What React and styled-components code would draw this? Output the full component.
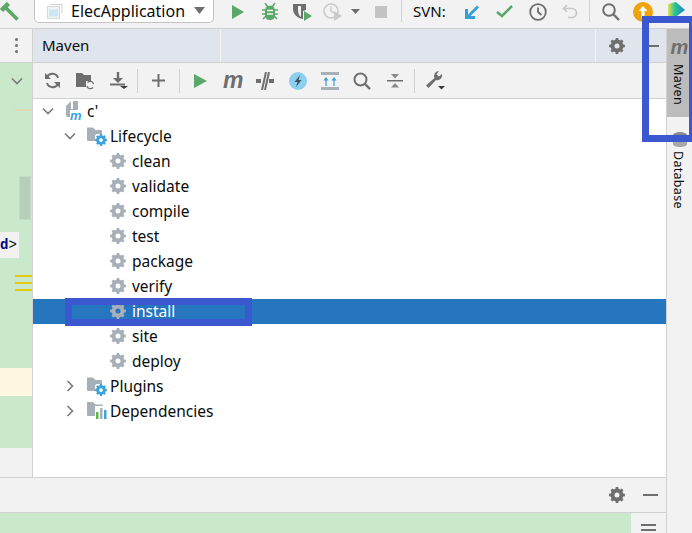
import React from 'react';
import styled, { createGlobalStyle } from 'styled-components';

const GlobalStyle = createGlobalStyle`
  html, body {
    margin: 0;
    padding: 0;
    overflow: hidden;
    background: #f2f2f2;
  }
  * { box-sizing: border-box; }
`;

const gearPoints = (teeth = 8) => {
  const pts = [];
  const step = (Math.PI * 2) / teeth;
  for (let i = 0; i < teeth; i++) {
    const a = i * step - Math.PI / 2;
    const w = step * 0.2;
    const v = step * 0.31;
    [[6.4, a - v], [8, a - w], [8, a + w], [6.4, a + v]].forEach(([r, t]) => {
      pts.push(`${(8 + r * Math.cos(t)).toFixed(2)} ${(8 + r * Math.sin(t)).toFixed(2)}`);
    });
  }
  return `M${pts.join('L')}Z M8 5.5a2.5 2.5 0 1 0 0 5a2.5 2.5 0 1 0 0 -5Z`;
};
const GEAR = gearPoints();

const Gear = ({ color = '#a7b0b8', size = 16 }) => (
  <svg width={size} height={size} viewBox="0 0 16 16">
    <path d={GEAR} fill={color} fillRule="evenodd" />
  </svg>
);

const Chevron = ({ open }) => (
  <svg width="16" height="16" viewBox="0 0 16 16">
    <path
      d={open ? 'M3 5.5l5 5 5-5' : 'M5.5 3l5 5-5 5'}
      fill="none"
      stroke="#7a7a7a"
      strokeWidth="1.6"
    />
  </svg>
);

const Folder = ({ children }) => (
  <svg width="20" height="20" viewBox="0 0 20 20">
    <path d="M0 1.5h6l2.5 2.5H14a1 1 0 0 1 1 1v10H1a1 1 0 0 1-1-1z" fill="#a7b0b8" />
    {children}
  </svg>
);

const GearBadge = () => (
  <svg x="8" y="8" width="12" height="12" viewBox="0 0 16 16">
    <circle cx="8" cy="8" r="10" fill="#fff" />
    <path d={GEAR} fill="#3ba4dc" fillRule="evenodd" />
  </svg>
);

const RootIcon = () => (
  <svg width="19" height="20" viewBox="0 0 19 20">
    <path d="M8 0h5v14H8z" fill="#a7b0b8" />
    <path d="M1 5l5-5v8h3v8H3a2 2 0 0 1-2-2z" fill="#a7b0b8" />
    <rect x="5" y="9" width="14" height="11" fill="#fff" />
    <text x="5" y="18.500" fontFamily="Liberation Sans, sans-serif" fontWeight="700" fontStyle="italic" fontSize="13" fill="#3ba4dc">m</text>
  </svg>
);

const DepsIcon = () => (
  <svg width="20" height="20" viewBox="0 0 20 20">
    <path d="M0 1h6l2.5 2.5H15a1 1 0 0 1 1 1V15H1a1 1 0 0 1-1-1z" fill="#a7b0b8" />
    <rect x="8" y="5" width="12" height="13" fill="#fff" />
    <rect x="9" y="11" width="2.5" height="7" fill="#62b543" />
    <rect x="13" y="7" width="2.5" height="11" fill="#a7b0b8" />
    <rect x="17" y="9" width="2.5" height="9" fill="#3ba4dc" />
  </svg>
);

const Page = styled.div`
  width: 692px;
  height: 533px;
  display: flex;
  flex-direction: column;
  overflow: hidden;
  position: relative;
  background: #f2f2f2;
  color: #0b0b0b;
  font-family: 'Noto Sans', 'Open Sans', sans-serif;
  font-size: 15px;
`;

const TopBar = styled.header`
  height: 29px;
  flex: none;
  display: flex;
  align-items: flex-start;
  border-bottom: 1px solid #d1d1d1;
`;

const TopIcon = styled.div`
  flex: none;
  width: ${p => p.$w}px;
  margin-left: ${p => p.$ml || 0}px;
  height: 23px;
  display: flex;
  align-items: center;
  justify-content: center;
`;

const ComboBox = styled.div`
  flex: none;
  width: 180px;
  height: 24px;
  margin-top: -1px;
  margin-left: 15px;
  background: #fff;
  border: 1px solid #c4c4c4;
  border-top: 0;
  border-radius: 0 0 5px 5px;
  display: flex;
  align-items: center;
  padding-left: 11px;
`;

const ComboLabel = styled.span`
  margin-left: 7px;
  width: 123px;
  font-size: 16px;
  line-height: 22px;
  white-space: nowrap;
`;

const TopSep = styled.div`
  flex: none;
  width: 1px;
  height: 22px;
  background: #d1d1d1;
  margin-left: ${p => p.$ml}px;
`;

const SvnLabel = styled.span`
  flex: none;
  margin-left: 11px;
  line-height: 22px;
`;

const Middle = styled.div`
  flex: 1;
  min-height: 0;
  display: flex;
`;

const Workspace = styled.div`
  flex: 1;
  min-width: 0;
  display: flex;
  flex-direction: column;
`;

const Columns = styled.div`
  flex: 1;
  min-height: 0;
  display: flex;
`;

const Gutter = styled.aside`
  width: 33px;
  flex: none;
  display: flex;
  flex-direction: column;
  border-right: 1px solid #d1d1d1;
`;

const GutterHead = styled.div`
  height: 34px;
  flex: none;
  display: flex;
  align-items: center;
  justify-content: center;
  padding-left: 1px;
  border-bottom: 1px solid #d1d1d1;
`;

const Dots = styled.div`
  display: flex;
  flex-direction: column;
  gap: 3px;
  & > i {
    display: block;
    width: 3px;
    height: 3px;
    border-radius: 50%;
    background: #6e6e6e;
  }
`;

const GreenArea = styled.div`
  height: 385px;
  flex: none;
  background: #c9e8cc;
  display: flex;
  flex-direction: column;
`;

const GutterFold = styled.div`
  height: 36px;
  padding-left: 9px;
  display: flex;
  align-items: center;
`;

const TanLine = styled.div`
  height: 2px;
  margin: 10px 0 0 15px;
  background: #e3d6b5;
`;

const ScrollThumb = styled.div`
  width: 12px;
  height: 44px;
  margin: 65px 0 0 19px;
  background: #b5cfb9;
  border: 1px solid #c2dbc6;
`;

const CodeChip = styled.div`
  width: 19px;
  height: 26px;
  margin-top: 12px;
  background: #f2f2f2;
  font-family: 'Liberation Mono', monospace;
  font-size: 14px;
  line-height: 26px;
  white-space: nowrap;
  overflow: hidden;
  & > b { color: #000080; }
`;

const YellowMarks = styled.div`
  margin: 17px 0 0 15px;
  height: 16px;
  display: flex;
  flex-direction: column;
  justify-content: space-between;
  & > i {
    display: block;
    height: 2px;
    background: #e8c90c;
  }
`;

const CreamBand = styled.div`
  height: 28px;
  margin-top: 77px;
  background: #fff8e1;
`;

const Panel = styled.section`
  flex: 1;
  min-width: 0;
  display: flex;
  flex-direction: column;
`;

const PanelHead = styled.div`
  height: 34px;
  flex: none;
  background: #e0e4ec;
  border-bottom: 1px solid #d1d1d1;
  display: flex;
  align-items: center;
`;

const HeadTab = styled.div`
  width: 188px;
  height: 100%;
  flex: none;
  padding-left: 9px;
  line-height: 33px;
  border-right: 1px solid #f2f2f2;
`;

const HeadFill = styled.div`
  width: 375px;
  height: 100%;
  flex: none;
  border-right: 1px solid #f2f2f2;
`;

const HeadAction = styled.div`
  flex: none;
  width: ${p => p.$w}px;
  margin-left: ${p => p.$ml || 0}px;
  display: flex;
  justify-content: center;
`;

const Minus = styled.i`
  display: block;
  width: 15px;
  height: 2px;
  background: #6e6e6e;
`;

const ToolBar = styled.div`
  height: 36px;
  flex: none;
  border-bottom: 1px solid #d1d1d1;
  display: flex;
  align-items: center;
  padding-left: 3px;
`;

const Tool = styled.div`
  flex: none;
  width: ${p => p.$w || 33}px;
  display: flex;
  justify-content: center;
  align-items: center;
  height: 24px;
`;

const ToolSep = styled.div`
  flex: none;
  width: 1px;
  height: 24px;
  background: #d1d1d1;
  margin: 0 4px 0 ${p => p.$ml || 2}px;
`;

const MavenGlyph = styled.span`
  font-family: 'Liberation Sans', sans-serif;
  font-weight: 700;
  font-style: italic;
  font-size: ${p => p.$size || 23}px;
  line-height: 1;
  color: #6e6e6e;
`;

const Tree = styled.div`
  flex: 1;
  min-height: 0;
  background: #fff;
  font-size: 15.5px;
`;

const Row = styled.div`
  height: 25px;
  display: flex;
  align-items: center;
  padding-left: ${p => p.$pad}px;
  padding-bottom: 2px;
  background: ${p => (p.$selected ? '#2675bf' : 'transparent')};
  color: ${p => (p.$selected ? '#fff' : '#0b0b0b')};
  white-space: nowrap;
`;

const RowChevron = styled.span`
  flex: none;
  display: flex;
  width: 16px;
  margin-right: 9px;
`;

const RowIcon = styled.span`
  flex: none;
  display: flex;
  margin-right: ${p => p.$mr}px;
`;

const BottomBar = styled.div`
  height: 36px;
  flex: none;
  border-top: 1px solid #d1d1d1;
  border-bottom: 1px solid #d1d1d1;
  display: flex;
  align-items: center;
  justify-content: flex-end;
`;

const Footer = styled.div`
  height: 20px;
  flex: none;
  display: flex;
`;

const FooterGreen = styled.div`
  flex: 1;
  background: #c9e8cc;
`;

const FooterSide = styled.div`
  width: 35px;
  flex: none;
  display: flex;
  flex-direction: column;
  align-items: center;
  gap: 3px;
  padding-top: 11px;
  & > i {
    display: block;
    width: 15px;
    height: 2px;
    flex: none;
    background: #6e6e6e;
  }
`;

const RightStrip = styled.aside`
  width: 26px;
  flex: none;
  border-left: 1px solid #d1d1d1;
  display: flex;
  flex-direction: column;
`;

const StripTab = styled.div`
  height: 88px;
  flex: none;
  background: #bcbcbc;
  display: flex;
  flex-direction: column;
  align-items: center;
`;

const StripIcon = styled.div`
  height: 35px;
  flex: none;
  display: flex;
  align-items: center;
  justify-content: center;
`;

const VerticalLabel = styled.span`
  writing-mode: vertical-rl;
  font-size: 12.5px;
  line-height: 16px;
  letter-spacing: 0.3px;
  margin-right: 4px;
  color: #0b0b0b;
`;

const DbWrap = styled.div`
  margin-top: 15px;
  display: flex;
  flex-direction: column;
  align-items: center;
  gap: 4px;
`;

const AnnotationBox = styled.div`
  position: absolute;
  border: 7px solid #3b58d0;
  pointer-events: none;
`;

const MavenBox = styled(AnnotationBox)`
  left: 642px;
  top: 16px;
  width: 54px;
  height: 126px;
`;

const InstallBox = styled(AnnotationBox)`
  left: 65px;
  top: 298px;
  width: 187px;
  height: 28px;
`;

const goals = ['clean', 'validate', 'compile', 'test', 'package', 'verify', 'install', 'site', 'deploy'];

const TopToolbar = () => (
  <TopBar>
    <TopIcon $w={19}>
      <svg width="19" height="19" viewBox="0 0 19 19">
        <path d="M1.500 8.500L8.500 1.500" stroke="#59a869" strokeWidth="4.500" />
        <path d="M5 5l12.500 12.500" stroke="#59a869" strokeWidth="3.500" />
      </svg>
    </TopIcon>
    <ComboBox>
      <svg width="18" height="16" viewBox="0 0 18 16">
        <path d="M4 1.500h12v9" fill="none" stroke="#d3d3d3" />
        <rect x="1.500" y="3.500" width="12" height="12" fill="#eef3f6" stroke="#d8d8d8" />
        <rect x="3" y="6.500" width="9" height="7" fill="#cde6f3" />
      </svg>
      <ComboLabel>ElecApplication</ComboLabel>
      <svg width="11" height="7" viewBox="0 0 11 7"><path d="M0 0h11L5.500 7z" fill="#6e6e6e" /></svg>
    </ComboBox>
    <TopIcon $w={12} $ml={18}>
      <svg width="12" height="14" viewBox="0 0 12 14"><path d="M0 0l12 7L0 14z" fill="#59a869" /></svg>
    </TopIcon>
    <TopIcon $w={16} $ml={18}>
      <svg width="16" height="17" viewBox="0 0 16 17">
        <path d="M3 0l2.500 3.500h5L13 0M0 7h16M0 11h16M1 16l3-3M15 16l-3-3" fill="none" stroke="#59a869" strokeWidth="1.500" />
        <rect x="3" y="3" width="10" height="14" rx="4.500" fill="#59a869" />
        <path d="M5 7.500h6M5 11h6" stroke="#f2f2f2" strokeWidth="1.300" />
      </svg>
    </TopIcon>
    <TopIcon $w={19} $ml={15}>
      <svg width="19" height="18" viewBox="0 0 19 18">
        <path d="M0 1h13v6l-3 1v8c-6-1-10-5-10-10z" fill="#6e6e6e" />
        <path d="M5 3h3v11c-2-1-3-4-3-7z" fill="#f2f2f2" />
        <path d="M11 8l8 5-8 5z" fill="#59a869" />
      </svg>
    </TopIcon>
    <TopIcon $w={19} $ml={11}>
      <svg width="19" height="18" viewBox="0 0 19 18">
        <circle cx="8" cy="8" r="7" fill="none" stroke="#cacaca" strokeWidth="1.600" />
        <path d="M8 3.500V8l3 2" fill="none" stroke="#cacaca" strokeWidth="1.400" />
        <path d="M11 8l8 5-8 5z" fill="#cacaca" />
      </svg>
    </TopIcon>
    <TopIcon $w={9} $ml={9}>
      <svg width="9" height="5" viewBox="0 0 9 5"><path d="M0 0h9L4.500 5z" fill="#6e6e6e" /></svg>
    </TopIcon>
    <TopIcon $w={12} $ml={15}>
      <svg width="12" height="12"><rect width="12" height="12" fill="#c4c4c4" /></svg>
    </TopIcon>
    <TopSep $ml={14} />
    <SvnLabel>SVN:</SvnLabel>
    <TopIcon $w={14} $ml={19}>
      <svg width="14" height="14" viewBox="0 0 14 14">
        <path d="M13 1.500L3 11.500" stroke="#389fd6" strokeWidth="2.800" />
        <path d="M0 4h3v7h7v3H0z" fill="#389fd6" />
      </svg>
    </TopIcon>
    <TopIcon $w={17} $ml={17}>
      <svg width="17" height="13" viewBox="0 0 17 13"><path d="M1 7l5 4 10-10" fill="none" stroke="#59a869" strokeWidth="2.600" /></svg>
    </TopIcon>
    <TopIcon $w={18} $ml={16}>
      <svg width="18" height="18" viewBox="0 0 18 18">
        <circle cx="9" cy="9" r="7.800" fill="none" stroke="#6e6e6e" strokeWidth="1.800" />
        <path d="M9 4.500V9l3.500 3" fill="none" stroke="#6e6e6e" strokeWidth="1.800" />
      </svg>
    </TopIcon>
    <TopIcon $w={16} $ml={15}>
      <svg width="16" height="15" viewBox="0 0 16 15">
        <path d="M5 1L1.500 4.500 5 8" fill="none" stroke="#c8c8c8" strokeWidth="1.700" />
        <path d="M2 4.500h8a4.500 4.500 0 0 1 0 9H6" fill="none" stroke="#c8c8c8" strokeWidth="1.700" />
      </svg>
    </TopIcon>
    <TopSep $ml={11} />
    <TopIcon $w={18} $ml={12}>
      <svg width="18" height="18" viewBox="0 0 18 18">
        <circle cx="7" cy="7" r="5.800" fill="none" stroke="#6e6e6e" strokeWidth="2" />
        <path d="M11 11l6 6" stroke="#6e6e6e" strokeWidth="2.400" />
      </svg>
    </TopIcon>
    <TopIcon $w={20} $ml={13}>
      <svg width="20" height="20" viewBox="0 0 20 20">
        <circle cx="10" cy="10" r="10" fill="#f0a30a" />
        <path d="M10 4l4.500 5H11.500v7h-3V9H5.500z" fill="#fff" />
      </svg>
    </TopIcon>
    <TopIcon $w={18} $ml={14}>
      <svg width="18" height="19" viewBox="0 0 18 19">
        <defs>
          <linearGradient id="logoGrad" x1="0" y1="0" x2="1" y2="0">
            <stop offset="0" stopColor="#e8e05a" />
            <stop offset="0.4" stopColor="#2cc58f" />
            <stop offset="1" stopColor="#1c7fd6" />
          </linearGradient>
        </defs>
        <path d="M1 2l8-2 9 8-12 9-5-3z" fill="url(#logoGrad)" />
      </svg>
    </TopIcon>
  </TopBar>
);

const MavenToolbar = () => (
  <ToolBar>
    <Tool>
      <svg width="17" height="17" viewBox="0 0 17 17">
        <path d="M14 6A6 6 0 0 0 3 5M3 11a6 6 0 0 0 11 1" fill="none" stroke="#6e6e6e" strokeWidth="2" />
        <path d="M1 1v6h6zM16 16v-6h-6z" fill="#6e6e6e" />
      </svg>
    </Tool>
    <Tool>
      <svg width="19" height="18" viewBox="0 0 19 18">
        <path d="M0 1h6l2 2h7v6h-5v6H0z" fill="#6e6e6e" />
        <path d="M17.500 12a3.500 3.500 0 0 0-6-1.500M11 14a3.500 3.500 0 0 0 6 1.500" fill="none" stroke="#6e6e6e" strokeWidth="1.200" />
      </svg>
    </Tool>
    <Tool>
      <svg width="18" height="17" viewBox="0 0 18 17">
        <path d="M6.800 0h2.400v6H13l-5 5-5-5h3.800z" fill="#6e6e6e" />
        <rect x="0" y="11.500" width="15" height="2" fill="#6e6e6e" />
        <path d="M10 14h8l-4 3z" fill="#3c3c3c" />
      </svg>
    </Tool>
    <ToolSep />
    <Tool>
      <svg width="13" height="13" viewBox="0 0 13 13"><path d="M5.500 0h2v5.500H13v2H7.500V13h-2V7.500H0v-2h5.500z" fill="#6e6e6e" /></svg>
    </Tool>
    <ToolSep $ml={4} />
    <Tool>
      <svg width="13" height="14" viewBox="0 0 13 14"><path d="M0 0l13 7L0 14z" fill="#59a869" /></svg>
    </Tool>
    <Tool $w={32.3}><MavenGlyph>m</MavenGlyph></Tool>
    <Tool $w={32.3}>
      <svg width="18" height="18" viewBox="0 0 18 18">
        <path d="M0 7h5v4H0zM13 7h5v4h-5z" fill="#6e6e6e" />
        <path d="M10 0L6 18M13 0L9 18" stroke="#6e6e6e" strokeWidth="2" />
      </svg>
    </Tool>
    <Tool $w={32.3}>
      <svg width="18" height="18" viewBox="0 0 18 18">
        <circle cx="9" cy="9" r="9" fill="#8ccfee" />
        <path d="M11 3L5.500 10H8.500L7 15l5.500-7H9.500z" fill="#3f5666" />
      </svg>
    </Tool>
    <Tool $w={32.3}>
      <svg width="18" height="18" viewBox="0 0 18 18">
        <rect width="18" height="3" fill="#a7b0b8" />
        <rect y="15" width="18" height="3" fill="#a7b0b8" />
        <path d="M5 14V8M13 14V8" stroke="#389fd6" strokeWidth="1.200" />
        <path d="M5 5l2.500 3.500h-5zM13 5l2.500 3.500h-5z" fill="#389fd6" />
      </svg>
    </Tool>
    <Tool $w={32.3}>
      <svg width="18" height="18" viewBox="0 0 18 18">
        <circle cx="7.500" cy="7.500" r="6" fill="none" stroke="#6e6e6e" strokeWidth="2" />
        <path d="M12 12l5 5" stroke="#6e6e6e" strokeWidth="2.400" />
      </svg>
    </Tool>
    <Tool $w={32.3}>
      <svg width="16" height="16" viewBox="0 0 16 16">
        <path d="M0 7h16v1.500H0z" fill="#6e6e6e" />
        <path d="M4 1h8L8 5.500zM4 14.500h8L8 10z" fill="#8a8a8a" />
      </svg>
    </Tool>
    <ToolSep $ml={3} />
    <Tool>
      <svg width="20" height="19" viewBox="0 0 20 19">
        <path d="M14 0a5 5 0 0 0-4.500 7L1 14.500 3.500 17 11 9a5 5 0 0 0 6-6l-3 2.500-2.500-2L14 0z" fill="#6e6e6e" />
        <path d="M13 15h7l-3.500 3.500z" fill="#3c3c3c" />
      </svg>
    </Tool>
  </ToolBar>
);

export default function App() {
  return (
    <>
      <GlobalStyle />
      <Page>
        <TopToolbar />
        <Middle>
          <Workspace>
            <Columns>
              <Gutter>
                <GutterHead>
                  <Dots><i /><i /><i /></Dots>
                </GutterHead>
                <GreenArea>
                  <GutterFold><Chevron open /></GutterFold>
                  <TanLine />
                  <ScrollThumb />
                  <CodeChip><b>d</b>&gt;</CodeChip>
                  <YellowMarks><i /><i /><i /></YellowMarks>
                  <CreamBand />
                </GreenArea>
              </Gutter>
              <Panel>
                <PanelHead>
                  <HeadTab>Maven</HeadTab>
                  <HeadFill />
                  <HeadAction $w={16} $ml={13}><Gear color="#6e6e6e" /></HeadAction>
                  <HeadAction $w={16} $ml={18}><Minus /></HeadAction>
                </PanelHead>
                <MavenToolbar />
                <Tree>
                  <Row $pad={7}>
                    <RowChevron><Chevron open /></RowChevron>
                    <RowIcon $mr={3}><RootIcon /></RowIcon>
                    c'
                  </Row>
                  <Row $pad={29}>
                    <RowChevron><Chevron open /></RowChevron>
                    <RowIcon $mr={3}><Folder><GearBadge /></Folder></RowIcon>
                    Lifecycle
                  </Row>
                  {goals.map(goal => (
                    <Row key={goal} $pad={77} $selected={goal === 'install'}>
                      <RowIcon $mr={6}><Gear /></RowIcon>
                      {goal}
                    </Row>
                  ))}
                  <Row $pad={29}>
                    <RowChevron><Chevron /></RowChevron>
                    <RowIcon $mr={3}><Folder><GearBadge /></Folder></RowIcon>
                    Plugins
                  </Row>
                  <Row $pad={29}>
                    <RowChevron><Chevron /></RowChevron>
                    <RowIcon $mr={3}><DepsIcon /></RowIcon>
                    Dependencies
                  </Row>
                </Tree>
              </Panel>
            </Columns>
            <BottomBar>
              <HeadAction $w={16}><Gear color="#6e6e6e" /></HeadAction>
              <HeadAction $w={16} $ml={17}><Minus /></HeadAction>
              <HeadAction $w={8} />
            </BottomBar>
            <Footer>
              <FooterGreen />
              <FooterSide><i /><i /></FooterSide>
            </Footer>
          </Workspace>
          <RightStrip>
            <StripTab>
              <StripIcon><MavenGlyph $size={20}>m</MavenGlyph></StripIcon>
              <VerticalLabel>Maven</VerticalLabel>
            </StripTab>
            <DbWrap>
              <svg width="16" height="15" viewBox="0 0 16 15">
                <ellipse cx="8" cy="3" rx="7" ry="3" fill="#8a8a8a" />
                <path d="M1 5v7c0 2 3 3 7 3s7-1 7-3V5c-1 2-4 3-7 3S2 7 1 5z" fill="#a8a8a8" />
              </svg>
              <VerticalLabel>Database</VerticalLabel>
            </DbWrap>
          </RightStrip>
        </Middle>
        <MavenBox />
        <InstallBox />
      </Page>
    </>
  );
}
